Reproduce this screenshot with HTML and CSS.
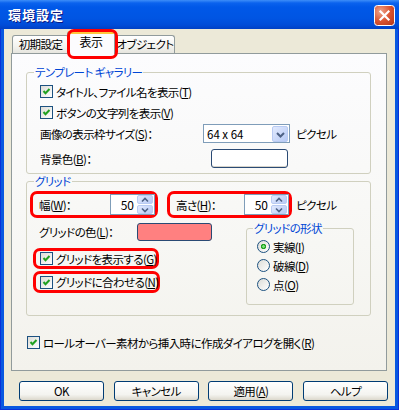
FILE: index.html
```html
<!DOCTYPE html>
<html lang="ja">
<head>
	<meta charset="UTF-8">
	<title>環境設定</title>
	<link rel="stylesheet" href="styles.css">
</head>
<body>
	<div class="window">
		<div class="titlebar">
			<span class="title">環境設定</span>
			<span class="close">
				<svg width="21" height="21" viewBox="0 0 21 21">
					<defs>
						<radialGradient id="cg" cx="0.3" cy="0.3" r="0.9">
							<stop offset="0" stop-color="#EFA58C"/>
							<stop offset="0.55" stop-color="#DA5330"/>
							<stop offset="1" stop-color="#B83A1B"/>
						</radialGradient>
					</defs>
					<rect x="0.5" y="0.5" width="20" height="20" rx="3" fill="url(#cg)" stroke="#fff"/>
					<path d="M6.5 6.5l8 8M14.5 6.5l-8 8" stroke="#fff" stroke-width="2.2" stroke-linecap="square"/>
				</svg>
			</span>
		</div>
		<div class="client">
			<div class="tabs">
				<span class="tab t1">初期設定</span>
				<span class="tab active">表示</span>
				<span class="tab t3">オブジェクト</span>
			</div>
			<div class="panel">
				<!-- テンプレート ギャラリー -->
				<fieldset class="group g1">
					<legend>テンプレート ギャラリー</legend>
					<div class="body">
						<div class="row">
							<span class="box"><svg width="11" height="11" viewBox="0 0 11 11"><path d="M2.5 5l2 2.2 4-4.2" fill="none" stroke="#21A121" stroke-width="2"/></svg></span>
							タイトル、ファイル名を表示(<u>T</u>)
						</div>
						<div class="row">
							<span class="box"><svg width="11" height="11" viewBox="0 0 11 11"><path d="M2.5 5l2 2.2 4-4.2" fill="none" stroke="#21A121" stroke-width="2"/></svg></span>
							ボタンの文字列を表示(<u>V</u>)
						</div>
						<div class="row size">
							<span class="lbl">画像の表示枠サイズ(<u>S</u>)：</span>
							<span class="select">
								<span class="val">64 x 64</span>
								<span class="drop"><svg width="15" height="15" viewBox="0 0 15 15"><path d="M4 6l3.5 3.5L11 6" fill="none" stroke="#4D6185" stroke-width="2"/></svg></span>
							</span>
							<span class="unit">ピクセル</span>
						</div>
						<div class="row bgcolor">
							<span class="lbl">背景色(<u>B</u>)：</span>
							<span class="swatch"></span>
						</div>
					</div>
				</fieldset>

				<!-- グリッド -->
				<fieldset class="group g2">
					<legend>グリッド</legend>
					<div class="body">
						<div class="size-row">
							<div class="mark mw">
								<span class="lbl">幅(<u>W</u>)：</span>
								<span class="spin">
									<span class="num">50</span>
									<span class="arrows">
										<span class="ab"><svg width="14" height="8" viewBox="0 0 14 8"><path d="M4 5.5l3-3 3 3" fill="none" stroke="#4D6185" stroke-width="1.6"/></svg></span>
										<span class="ab"><svg width="14" height="8" viewBox="0 0 14 8"><path d="M4 2.5l3 3 3-3" fill="none" stroke="#4D6185" stroke-width="1.6"/></svg></span>
									</span>
								</span>
							</div>
							<div class="mark mh">
								<span class="lbl">高さ(<u>H</u>)：</span>
								<span class="spin">
									<span class="num">50</span>
									<span class="arrows">
										<span class="ab"><svg width="14" height="8" viewBox="0 0 14 8"><path d="M4 5.5l3-3 3 3" fill="none" stroke="#4D6185" stroke-width="1.6"/></svg></span>
										<span class="ab"><svg width="14" height="8" viewBox="0 0 14 8"><path d="M4 2.5l3 3 3-3" fill="none" stroke="#4D6185" stroke-width="1.6"/></svg></span>
									</span>
								</span>
							</div>
							<span class="unit">ピクセル</span>
						</div>
						<div class="grid-body">
							<div class="grid-left">
								<div class="color-row">
									<span class="lbl">グリッドの色(<u>L</u>)：</span>
									<span class="swatch red"></span>
								</div>
								<div class="mark mc1">
									<span class="box"><svg width="11" height="11" viewBox="0 0 11 11"><path d="M2.5 5l2 2.2 4-4.2" fill="none" stroke="#21A121" stroke-width="2"/></svg></span>
									グリッドを表示する(<u>G</u>)
								</div>
								<div class="mark mc2">
									<span class="box"><svg width="11" height="11" viewBox="0 0 11 11"><path d="M2.5 5l2 2.2 4-4.2" fill="none" stroke="#21A121" stroke-width="2"/></svg></span>
									グリッドに合わせる(<u>N</u>)
								</div>
							</div>
							<fieldset class="group shape">
								<legend>グリッドの形状</legend>
								<div class="body">
									<div class="radio-row"><span class="radio on"></span>実線(<u>I</u>)</div>
									<div class="radio-row"><span class="radio"></span>破線(<u>D</u>)</div>
									<div class="radio-row"><span class="radio"></span>点(<u>O</u>)</div>
								</div>
							</fieldset>
						</div>
					</div>
				</fieldset>

				<div class="row rollover">
					<span class="box"><svg width="11" height="11" viewBox="0 0 11 11"><path d="M2.5 5l2 2.2 4-4.2" fill="none" stroke="#21A121" stroke-width="2"/></svg></span>
					ロールオーバー素材から挿入時に作成ダイアログを開く(<u>R</u>)
				</div>
			</div>
			<div class="buttons">
				<span class="btn">OK</span>
				<span class="btn">キャンセル</span>
				<span class="btn">適用(<u>A</u>)</span>
				<span class="btn">ヘルプ</span>
			</div>
		</div>
	</div>
</body>
</html>
```

FILE: styles.css
```css
body {
	margin: 0;
	font-family: "Noto Sans CJK JP", "Liberation Sans", sans-serif;
	font-size: 11.5px;
	letter-spacing: -0.6px;
	font-feature-settings: "palt";
	white-space: nowrap;
	color: #000;
}
u {
	text-decoration-thickness: 1px;
	text-underline-offset: 1px;
}
.window {
	width: 399px;
	height: 410px;
	display: flex;
	flex-direction: column;
	background: #0858E0;
	box-shadow: inset 0 0 0 1px #0831D9;
}
.titlebar {
	height: 29px;
	flex: none;
	display: flex;
	align-items: center;
	justify-content: space-between;
	padding: 0 4px 0 8px;
	background: linear-gradient(#3D8EF8 0, #0A62EE 3px, #0058E8 7px, #0055E3 18px, #004CD8 25px, #0040C4 29px);
}
.title {
	color: #fff;
	font-weight: bold;
	font-size: 13px;
	letter-spacing: 1px;
	text-shadow: 1px 1px 0 #0A1883;
}
.close {
	display: block;
	width: 21px;
	height: 21px;
	margin-top: 2px;
}
.close svg {
	display: block;
}
.client {
	flex: 1;
	margin: 0 4px 4px;
	background: #ECE9D8;
	padding-top: 2px;
	display: flex;
	flex-direction: column;
}

/* tabs */
.tabs {
	height: 22px;
	display: flex;
	align-items: flex-end;
	padding-left: 8px;
}
.tab {
	box-sizing: border-box;
	height: 18px;
	border: 1px solid #919B9C;
	border-bottom: none;
	border-radius: 3px 3px 0 0;
	background: linear-gradient(#FFFFFF, #F3F3EF 60%, #E6E5DE);
	text-align: center;
	line-height: 17px;
}
.t1 {
	width: 57px;
}
.t3 {
	width: 62px;
	padding-left: 2px;
}
.tab.active {
	position: relative;
	z-index: 2;
	width: 48px;
	height: 23px;
	margin: 0 -2px -1px;
	border-top-color: #E68B2C;
	background: linear-gradient(#FFC83C 0 2px, #FCFCFE 2px);
	font-size: 12px;
	line-height: 19px;
}
.tab.active::after {
	content: "";
	position: absolute;
	left: -1px;
	top: -3px;
	right: -4px;
	bottom: -5px;
	border: 3px solid #F00;
	border-radius: 7px;
}

/* panel */
.panel {
	box-sizing: border-box;
	width: 376px;
	height: 318px;
	margin-left: 7px;
	border: 1px solid #919B9C;
	background: linear-gradient(#FCFCFE, #F7F7F4 60%, #F3F2EC);
	padding: 12px 15px 0 14px;
}
.group {
	margin: 0;
	padding: 0;
	min-width: 0;
	border: 1px solid #D0D0BF;
	border-radius: 3px;
}
.group legend {
	padding: 0 1px;
	margin-left: 7px;
	color: #0046D5;
	line-height: 13px;
}
.row {
	display: flex;
	align-items: center;
	height: 21px;
}
.box {
	box-sizing: border-box;
	width: 13px;
	height: 13px;
	margin-right: 3px;
	border: 1px solid #1C5180;
	background: linear-gradient(135deg, #DCDCD7, #FFFFFF);
	flex: none;
}
.box svg {
	display: block;
}
.g1 .body {
	padding: 2px 0 4px 13px;
}
.lbl {
	flex: none;
}
.size .lbl {
	width: 163px;
}
.select {
	box-sizing: border-box;
	width: 87px;
	height: 19px;
	display: flex;
	align-items: center;
	border: 1px solid #7F9DB9;
	background: #fff;
	padding: 0 1px 0 3px;
}
.select .val {
	flex: 1;
	letter-spacing: 0;
}
.drop {
	box-sizing: border-box;
	width: 16px;
	height: 16px;
	border: 1px solid #B9CBF3;
	border-radius: 2px;
	background: linear-gradient(135deg, #E2EAFE, #B7CAF5);
}
.drop svg {
	display: block;
}
.unit {
	margin-left: 6px;
}
.bgcolor {
	margin-top: 4px;
}
.bgcolor .lbl {
	width: 171px;
}
.swatch {
	box-sizing: border-box;
	width: 77px;
	height: 19px;
	border: 1px solid #2A4A74;
	border-radius: 3px;
	background: #fff;
	box-shadow: inset 0 -1px 0 #D6D3CA;
}

/* grid group */
.g2 {
	margin-top: 1px;
}
.g2 .body {
	padding: 3px 0 10px 3px;
}
.size-row {
	display: flex;
	align-items: center;
	height: 27px;
}
.mark {
	box-sizing: border-box;
	border: 3px solid #F00;
	border-radius: 7px;
	display: flex;
	align-items: center;
}
.mw {
	width: 128px;
	height: 27px;
	padding-left: 6px;
}
.mh {
	width: 125px;
	height: 27px;
	padding-left: 6px;
	margin-left: 9px;
}
.mark .lbl {
	flex: 1;
}
.spin {
	box-sizing: border-box;
	width: 45px;
	height: 21px;
	display: flex;
	align-items: center;
	justify-content: flex-end;
	border: 1px solid #7F9DB9;
	background: #fff;
	padding-right: 1px;
}
.num {
	margin-right: 3px;
	font-size: 12px;
	letter-spacing: 0;
}
.arrows {
	display: flex;
	flex-direction: column;
	gap: 1px;
}
.ab {
	box-sizing: border-box;
	width: 16px;
	height: 9px;
	border: 1px solid #B9CBF3;
	border-radius: 2px;
	background: linear-gradient(135deg, #E2EAFE, #B7CAF5);
	display: flex;
	align-items: center;
	justify-content: center;
}
.ab svg {
	display: block;
}
.size-row .unit {
	margin-left: 4px;
}
.grid-body {
	display: flex;
	align-items: flex-start;
}
.grid-left {
	width: 182px;
	flex: none;
}
.color-row {
	display: flex;
	align-items: center;
	height: 18px;
	margin-top: 5px;
	padding-left: 9px;
}
.color-row .lbl {
	width: 98px;
}
.swatch.red {
	width: 75px;
	height: 18px;
	background: #FF8080;
	box-shadow: none;
}
.mc1 {
	width: 126px;
	height: 21px;
	margin: 7px 0 0 3px;
	padding-left: 4px;
}
.mc2 {
	width: 127px;
	height: 22px;
	margin: 2px 0 0 3px;
	padding-left: 4px;
}
.shape {
	box-sizing: border-box;
	width: 108px;
	margin: 4px 0 0 34px;
}
.shape legend {
	margin-left: 6px;
}
.shape .body {
	padding: 2px 0 10px 10px;
}
.radio-row {
	display: flex;
	align-items: center;
	height: 19px;
}
.radio {
	box-sizing: border-box;
	width: 13px;
	height: 13px;
	margin-right: 3px;
	border: 1px solid #1C5180;
	border-radius: 50%;
	background: linear-gradient(135deg, #DCDCD7, #FFFFFF);
}
.radio.on {
	background: radial-gradient(circle, #7BE07B 0 1px, #21A121 1.6px 2.4px, transparent 3px), linear-gradient(135deg, #DCDCD7, #FFFFFF);
}
.rollover {
	margin-top: 16px;
	padding-left: 1px;
}

/* buttons */
.buttons {
	display: flex;
	justify-content: space-between;
	margin-top: 10px;
	padding: 0 7px 0 15px;
}
.btn {
	box-sizing: border-box;
	width: 85px;
	height: 20px;
	border: 1px solid #003C74;
	border-radius: 3px;
	background: linear-gradient(#FFFFFF, #F4F4F0 70%, #DCD8CC);
	text-align: center;
	line-height: 18px;
}
```
